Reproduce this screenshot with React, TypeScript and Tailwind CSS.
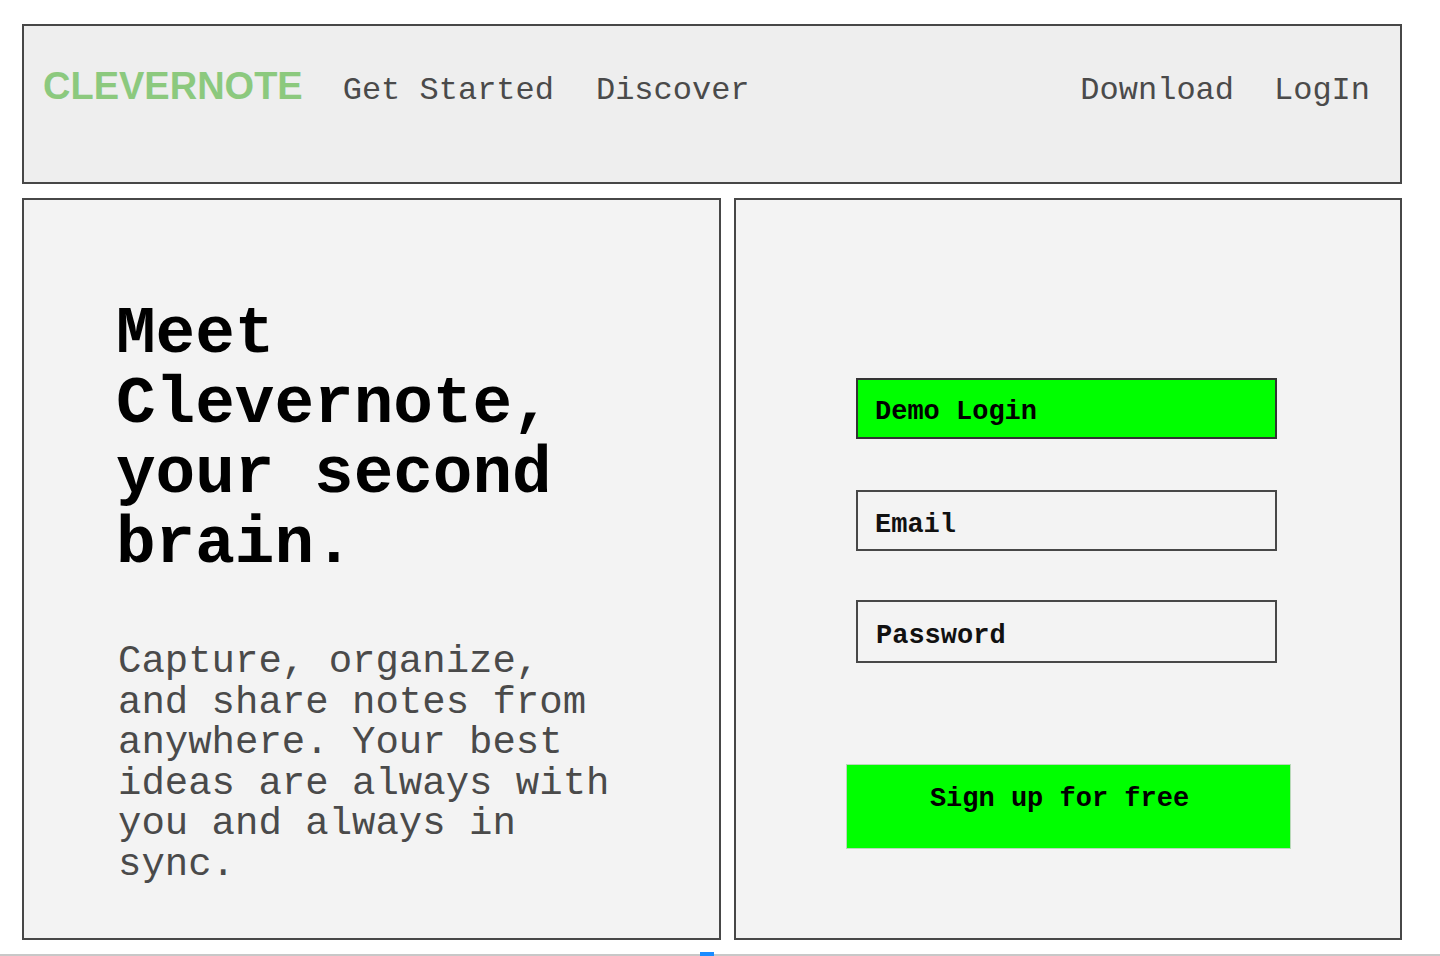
import React from 'react';

const mono = 'font-["Liberation_Mono","Courier_New",monospace]';

export default function App() {
  const navLeft = ['Get Started', 'Discover'];
  const navRight = ['Download', 'LogIn'];

  return (
    <div className="w-[1440px] h-[956px] bg-white overflow-hidden flex flex-col">
      <div className="pl-[22px] pt-[24px] w-[1402px] flex flex-col gap-[14px]">
        {/* header */}
        <header className="h-[160px] bg-[#eeeeee] border-2 border-[#474747] flex items-baseline pt-[41px] pl-[19px] pr-[30px]">
          <span className='font-["Liberation_Sans",Arial,sans-serif] font-bold text-[38px] leading-none text-[#8cc97e] mr-[40px]'>
            CLEVERNOTE
          </span>
          <nav className={`${mono} text-[32px] leading-none text-[#4a4a4a] flex gap-[42px]`}>
            {navLeft.map((n) => (
              <a key={n} href="#">{n}</a>
            ))}
          </nav>
          <nav className={`${mono} text-[32px] leading-none text-[#4a4a4a] flex gap-[40px] ml-auto`}>
            {navRight.map((n) => (
              <a key={n} href="#">{n}</a>
            ))}
          </nav>
        </header>

        {/* main panels */}
        <div className="flex gap-[13px] h-[742px]">
          <section className="w-[699px] bg-[#f3f3f3] border-2 border-[#474747] pl-[92px] pt-[100px]">
            <div className="w-[500px]">
              <h1 className={`${mono} font-bold text-[66px] leading-[70px] text-black`}>
                Meet Clevernote, your second brain.
              </h1>
              <p className={`${mono} text-[39px] leading-[40.5px] text-[#4a4a4a] mt-[62px] pl-[2px]`}>
                Capture, organize, and share notes from anywhere. Your best ideas are always with you and always in sync.
              </p>
            </div>
          </section>

          <section className="flex-1 bg-[#f3f3f3] border-2 border-[#474747] flex flex-col pt-[178px]">
            <button className={`${mono} ml-[120px] w-[421px] h-[61px] bg-[#00ff00] border-2 border-[#333333] text-left pl-[17px] pt-[8px] text-[27px] leading-none font-bold text-black`}>
              Demo Login
            </button>
            <div className={`${mono} ml-[120px] mt-[51px] w-[421px] h-[61px] border-2 border-[#474747] pl-[17px] pt-[20px] text-[27px] leading-none font-bold text-[#111111]`}>
              Email
            </div>
            <div className={`${mono} ml-[120px] mt-[49px] w-[421px] h-[63px] border-2 border-[#474747] pl-[18px] pt-[21px] text-[27px] leading-none font-bold text-[#111111]`}>
              Password
            </div>
            <button className={`${mono} ml-[110px] mt-[101px] w-[445px] h-[85px] bg-[#00ff00] border border-[#b9d9b9] pr-[18px] pb-[14px] text-center text-[27px] leading-none font-bold text-black`}>
              Sign up for free
            </button>
          </section>
        </div>
      </div>

      {/* bottom scroll strip */}
      <div className="relative mt-auto h-[4px]">
        <div className="absolute bottom-0 left-0 right-0 h-[2px] bg-[#c8c8c8]" />
        <div className="absolute bottom-0 left-[700px] w-[14px] h-[4px] bg-[#1a8cff]" />
      </div>
    </div>
  );
}
